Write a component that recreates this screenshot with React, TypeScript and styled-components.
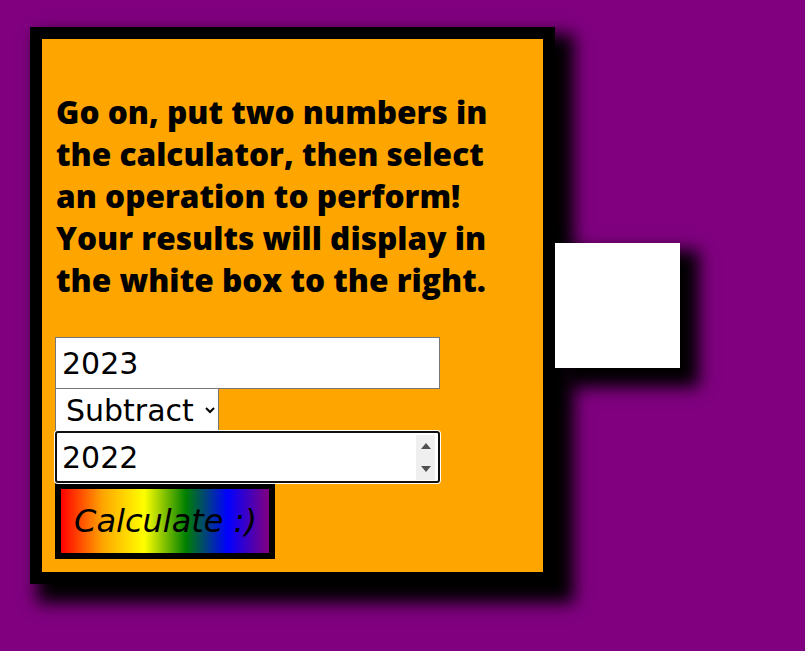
import React from "react";
import styled, { createGlobalStyle } from "styled-components";

const GlobalStyle = createGlobalStyle`
  html, body {
    margin: 0;
    padding: 0;
    background: #800080;
  }
  body {
    font-family: "DejaVu Sans", Verdana, sans-serif;
  }
`;

const Page = styled.div`
  box-sizing: border-box;
  min-height: 100vh;
  display: flex;
  align-items: flex-start;
  padding: 27px 0 0 30px;
`;

const Row = styled.div`
  display: flex;
  align-items: center;
`;

const Panel = styled.div`
  width: 475px;
  background: #ffa500;
  border: 12px solid #000;
  padding: 0 13px 13px 13px;
  box-shadow: 13px 13px 16px 6px #000;
  display: flex;
  flex-direction: column;
  align-items: flex-start;
`;

const Intro = styled.h2`
  margin: 52px 0 36px 1px;
  font-family: "Open Sans", "Liberation Sans", sans-serif;
  font-weight: 800;
  font-size: 31.6px;
  line-height: 42px;
  color: #000;
  white-space: nowrap;
`;

const FieldWrap = styled.div`
  position: relative;
  display: flex;
`;

const NumberField = styled.input<{ $focused?: boolean }>`
  box-sizing: border-box;
  width: 385px;
  height: 52px;
  margin: 0;
  padding: 0 6px;
  font-family: "DejaVu Sans", Verdana, sans-serif;
  font-size: 30px;
  color: #000;
  background: #fff;
  border: ${(p) => (p.$focused ? "2px solid #101010" : "1px solid #767676")};
  border-radius: ${(p) => (p.$focused ? "3px" : "0")};
  box-shadow: ${(p) => (p.$focused ? "0 0 0 1px #fff" : "none")};
  outline: none;
  caret-color: #000;
  padding-left: ${(p) => (p.$focused ? "5px" : "6px")};
  -moz-appearance: textfield;
  &::-webkit-inner-spin-button,
  &::-webkit-outer-spin-button {
    -webkit-appearance: none;
    margin: 0;
  }
`;

const Spinner = styled.div`
  position: absolute;
  top: 4px;
  right: 5px;
  bottom: 3px;
  width: 19px;
  background: #efefef;
  display: flex;
  flex-direction: column;
  align-items: center;
  justify-content: space-around;
  pointer-events: none;
`;

const Arrow = styled.span<{ $down?: boolean }>`
  width: 0;
  height: 0;
  border-left: 5px solid transparent;
  border-right: 5px solid transparent;
  ${(p) =>
    p.$down
      ? "border-top: 6px solid #505050;"
      : "border-bottom: 6px solid #505050;"}
`;

const OpSelect = styled.select`
  box-sizing: border-box;
  width: 164px;
  height: 42px;
  margin: 0;
  padding: 2px 0 0 6px;
  font-family: "DejaVu Sans", Verdana, sans-serif;
  font-size: 30px;
  color: #000;
  background: #fff;
  border: 1px solid #767676;
  border-top: none;
  border-radius: 0;
`;

const CalcButton = styled.button`
  box-sizing: border-box;
  width: 220px;
  height: 76px;
  margin: 0;
  padding: 0 0 0 1px;
  border: 6px solid #000;
  background: linear-gradient(to right, red, orange, yellow, green, blue, purple);
  font-family: "DejaVu Sans", Verdana, sans-serif;
  font-style: italic;
  font-size: 32px;
  color: #000;
  cursor: pointer;
`;

const ResultBox = styled.div`
  width: 125px;
  height: 125px;
  background: #fff;
  box-shadow: 13px 13px 16px 6px #000;
`;

export default function App() {
  return (
    <>
      <GlobalStyle />
      <Page>
        <Row>
          <Panel>
            <Intro>
              Go on, put two numbers in
              <br />
              the calculator, then select
              <br />
              an operation to perform!
              <br />
              Your results will display in
              <br />
              the white box to the right.
            </Intro>
            <NumberField type="number" defaultValue="2023" />
            <OpSelect defaultValue="subtract">
              <option value="add">Add</option>
              <option value="subtract">Subtract</option>
              <option value="multiply">Multiply</option>
              <option value="divide">Divide</option>
            </OpSelect>
            <FieldWrap>
              <NumberField type="number" defaultValue="2022" $focused autoFocus />
              <Spinner>
                <Arrow />
                <Arrow $down />
              </Spinner>
            </FieldWrap>
            <CalcButton type="button">Calculate :)</CalcButton>
          </Panel>
          <ResultBox />
        </Row>
      </Page>
    </>
  );
}
